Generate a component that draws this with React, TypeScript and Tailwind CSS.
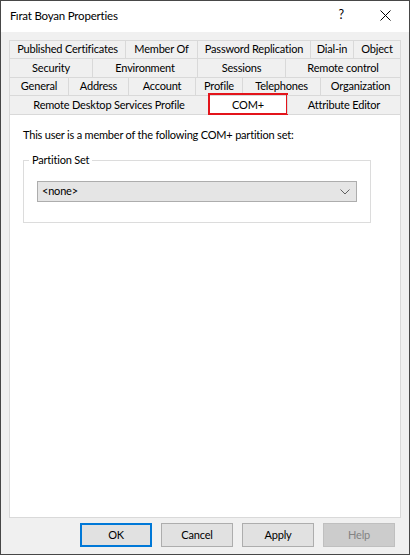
export default function App() {
  const rows: { label: string; w: number; active?: boolean }[][] = [
    [
      { label: "Published Certificates", w: 116 },
      { label: "Member Of", w: 72 },
      { label: "Password Replication", w: 113 },
      { label: "Dial-in", w: 43 },
      { label: "Object", w: 48 },
    ],
    [
      { label: "Security", w: 83 },
      { label: "Environment", w: 105 },
      { label: "Sessions", w: 88 },
      { label: "Remote control", w: 116 },
    ],
    [
      { label: "General", w: 59 },
      { label: "Address", w: 60 },
      { label: "Account", w: 67 },
      { label: "Profile", w: 47 },
      { label: "Telephones", w: 78 },
      { label: "Organization", w: 81 },
    ],
    [
      { label: "Remote Desktop Services Profile", w: 199 },
      { label: "COM+", w: 79, active: true },
      { label: "Attribute Editor", w: 114 },
    ],
  ];
  const heights = ["h-[18px]", "h-[19px]", "h-[18px]", "h-[19px]"];

  return (
    <div
      className="w-[412px] h-[559px] bg-white text-[11px] tracking-[-0.2px] text-black"
      style={{ fontFamily: "Lato, 'Liberation Sans', sans-serif" }}
    >
      <div className="w-[410px] h-[555px] border border-[#474747] flex flex-col">
        {/* title bar */}
        <div className="h-[31px] bg-white flex items-center pl-[9px] pr-[16px] pb-[2px]">
          <span className="text-[11.5px]">Fırat Boyan Properties</span>
          <span className="ml-auto mr-[36px] text-[12.5px]">?</span>
          <svg width="11" height="11" viewBox="0 0 11 11" className="mr-[2px]">
            <path d="M0.5 0.5 L10.5 10.5 M10.5 0.5 L0.5 10.5" stroke="#000" strokeWidth="1" />
          </svg>
        </div>

        {/* body */}
        <div className="flex-1 bg-[#f0f0f0] px-[8px] pt-[8px] flex flex-col">
          <div className="flex flex-col">
            {rows.map((row, ri) => (
              <div key={ri} className={`flex ${heights[ri]}`}>
                {row.map((t, ti) => (
                  <div
                    key={t.label}
                    className={`relative flex items-center justify-center border-t border-l border-[#d9d9d9] ${
                      ti === row.length - 1 ? "border-r" : ""
                    } ${t.active ? "bg-white" : "bg-[#f0f0f0]"}`}
                    style={{ width: t.w }}
                  >
                    <span className="whitespace-nowrap">{t.label}</span>
                    {t.active && (
                      <div className="absolute -top-[3px] -left-[1px] -right-[1px] -bottom-[1px] border-[2.5px] border-[#e3141b]" />
                    )}
                  </div>
                ))}
              </div>
            ))}
          </div>

          {/* panel */}
          <div className="w-[392px] h-[404px] bg-white border border-[#d9d9d9] px-[13px] pt-[12px]">
            <p className="leading-[16px]">This user is a member of the following COM+ partition set:</p>
            <fieldset className="mt-[9px] w-[348px] h-[71px] border border-[#dcdcdc] px-[13px]">
              <legend className="-ml-[8px] px-[3px] leading-[16px]">Partition Set</legend>
              <div className="mt-[13px] w-[320px] h-[21px] bg-[#e5e5e5] border border-[#adadad] flex items-center pl-[4px] pr-[6px]">
                <span>&lt;none&gt;</span>
                <svg width="10" height="6" viewBox="0 0 10 6" className="ml-auto">
                  <path d="M0.5 0.5 L5 5 L9.5 0.5" fill="none" stroke="#606060" strokeWidth="1" />
                </svg>
              </div>
            </fieldset>
          </div>

          {/* buttons */}
          <div className="mt-[5px] flex justify-end gap-[9px] pr-[6px]">
            <button className="w-[72px] h-[24px] bg-[#e1e1e1] border-2 border-[#0078d7]">OK</button>
            <button className="w-[72px] h-[24px] bg-[#e1e1e1] border border-[#adadad]">Cancel</button>
            <button className="w-[72px] h-[24px] bg-[#e1e1e1] border border-[#adadad]">Apply</button>
            <button className="w-[72px] h-[24px] bg-[#cccccc] border border-[#bfbfbf] text-[#838383]">Help</button>
          </div>
        </div>
      </div>
    </div>
  );
}
